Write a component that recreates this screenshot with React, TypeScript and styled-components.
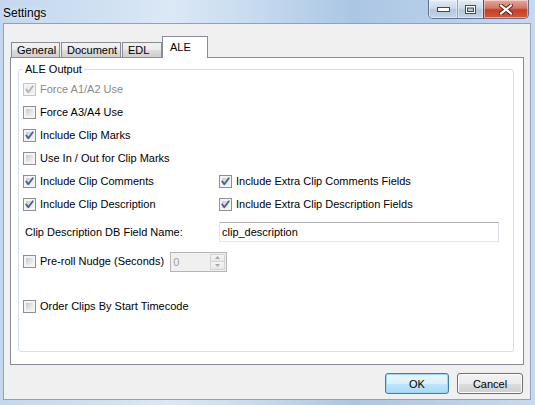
import React from 'react';
import styled, { createGlobalStyle } from 'styled-components';

const GlobalStyle = createGlobalStyle`
	html, body {
		margin: 0;
		padding: 0;
	}
	body {
		width: 535px;
		height: 405px;
		overflow: hidden;
		font-family: "Liberation Sans", Arial, sans-serif;
		font-size: 11px;
		color: #000;
	}
`;

const tabs = [
	{ name: 'General', width: 49 },
	{ name: 'Document', width: 60 },
	{ name: 'EDL', width: 40 },
	{ name: 'ALE', width: 46 },
];

const CheckMark = ({ disabled }: { disabled?: boolean }) => (
	<svg width="13" height="13" viewBox="0 0 13 13">
		<path
			d="M3.2 6.4 L5.3 9.3 L9.8 3.2"
			fill="none"
			stroke={disabled ? '#b4b4b4' : '#4a5f97'}
			strokeWidth="1.8"
			strokeLinecap="round"
			strokeLinejoin="round"
		/>
	</svg>
);

const CheckBox = ({ checked, disabled }: { checked?: boolean; disabled?: boolean }) => (
	<Box $disabled={disabled}>
		<BoxFill $disabled={disabled} />
		{checked && (
			<Mark>
				<CheckMark disabled={disabled} />
			</Mark>
		)}
	</Box>
);

const Option = ({ label, checked, disabled }: { label: string; checked?: boolean; disabled?: boolean }) => (
	<Row>
		<CheckBox checked={checked} disabled={disabled} />
		<Label $disabled={disabled}>{label}</Label>
	</Row>
);

const App: React.FunctionComponent = () => {
	return (
		<>
			<GlobalStyle />
			<Window>
				<TitleBar>
					<Title>Settings</Title>
					<Caption>
						<CapButton $w={28}>
							<svg width="13" height="5" viewBox="0 0 13 5">
								<rect x="0.5" y="0.5" width="12" height="4" fill="#fff" stroke="#3a4a60" />
							</svg>
						</CapButton>
						<CapButton $w={26}>
							<svg width="11" height="9" viewBox="0 0 11 9">
								<rect x="0.5" y="0.5" width="10" height="8" fill="#fff" stroke="#3a4a60" />
								<rect x="2.5" y="3" width="6" height="3.5" fill="#b6c8de" stroke="#3a4a60" />
							</svg>
						</CapButton>
						<CapButton $w={45} $close>
							<svg width="14" height="11" viewBox="0 0 14 11">
								<path d="M2 1.5 L12 9.5 M12 1.5 L2 9.5" stroke="#5a1e14" strokeWidth="4" strokeLinecap="square" />
								<path d="M2 1.5 L12 9.5 M12 1.5 L2 9.5" stroke="#fff" strokeWidth="2.2" strokeLinecap="square" />
							</svg>
						</CapButton>
					</Caption>
				</TitleBar>
				<Client>
					<TabStrip>
						{tabs.map((t) => (
							<Tab key={t.name} $active={t.name === 'ALE'} $w={t.width}>
								{t.name}
							</Tab>
						))}
					</TabStrip>
					<Panel>
						<Group>
							<Legend>ALE Output</Legend>
							<Option label="Force A1/A2 Use" checked disabled />
							<Option label="Force A3/A4 Use" />
							<Option label="Include Clip Marks" checked />
							<Option label="Use In / Out for Clip Marks" />
							<Pair>
								<Option label="Include Clip Comments" checked />
								<Option label="Include Extra Clip Comments Fields" checked />
								<Option label="Include Clip Description" checked />
								<Option label="Include Extra Clip Description Fields" checked />
							</Pair>
							<FieldRow>
								<FieldLabel>Clip Description DB Field Name:</FieldLabel>
								<TextBox>clip_description</TextBox>
							</FieldRow>
							<Row $top={8}>
								<CheckBox />
								<Label>Pre-roll Nudge (Seconds)</Label>
								<Spinner>
									<SpinValue>0</SpinValue>
									<SpinButtons>
										<SpinHalf>
											<svg width="5" height="3" viewBox="0 0 5 3">
												<path d="M0 3 L2.5 0 L5 3 Z" fill="#a8a8a8" />
											</svg>
										</SpinHalf>
										<SpinHalf>
											<svg width="5" height="3" viewBox="0 0 5 3">
												<path d="M0 0 L2.5 3 L5 0 Z" fill="#a8a8a8" />
											</svg>
										</SpinHalf>
									</SpinButtons>
								</Spinner>
							</Row>
							<Row $top={22}>
								<CheckBox />
								<Label>Order Clips By Start Timecode</Label>
							</Row>
						</Group>
					</Panel>
					<Buttons>
						<Button $default>OK</Button>
						<Button $w={66}>Cancel</Button>
					</Buttons>
				</Client>
			</Window>
		</>
	);
};

const Window = styled.div`
	width: 535px;
	height: 405px;
	box-sizing: border-box;
	display: flex;
	flex-direction: column;
	padding: 0 4px 5px 3px;
	background: linear-gradient(
		90deg,
		#c3d7ee 0%,
		#cfe0f2 18%,
		#dbe8f6 32%,
		#c6daef 48%,
		#abc6e4 66%,
		#b6cde8 80%,
		#c6d9ef 100%
	);
`;

const TitleBar = styled.div`
	height: 23px;
	display: flex;
	align-items: flex-start;
	justify-content: space-between;
`;

const Title = styled.div`
	font-size: 12px;
	line-height: 14px;
	padding-top: 6px;
	color: #000;
	text-shadow: 0 0 6px rgba(255, 255, 255, 0.9);
`;

const Caption = styled.div`
	display: flex;
	height: 19px;
	margin-right: 2px;
	box-sizing: border-box;
	border: 1px solid #5d7290;
	border-top: none;
	border-radius: 0 0 5px 5px;
	overflow: hidden;
`;

const CapButton = styled.div<{ $w: number; $close?: boolean }>`
	width: ${(p) => p.$w}px;
	display: flex;
	align-items: center;
	justify-content: center;
	box-sizing: border-box;
	border-left: ${(p) => (p.$close ? '1px solid #7c3a33' : '1px solid #8fa3bd')};
	&:first-child {
		border-left: none;
	}
	background: ${(p) =>
		p.$close
			? 'linear-gradient(180deg, #e6a99c 0%, #d47564 45%, #c24125 55%, #d6583b 100%)'
			: 'linear-gradient(180deg, #e3ecf6 0%, #cbd9ea 45%, #b3c6de 55%, #c4d5ea 100%)'};
	box-shadow: inset 0 0 0 1px rgba(255, 255, 255, 0.45);
`;

const Client = styled.div`
	flex: 1;
	display: flex;
	flex-direction: column;
	background: #f0f0f0;
	border: 1px solid #8ea2bb;
	padding: 12px 6px 5px 6px;
`;

const TabStrip = styled.div`
	display: flex;
	align-items: flex-end;
	gap: 1px;
	height: 22px;
	margin-bottom: -1px;
	padding-left: 1px;
	position: relative;
	z-index: 1;
`;

const Tab = styled.div<{ $active?: boolean; $w: number }>`
	width: ${(p) => p.$w}px;
	height: ${(p) => (p.$active ? 22 : 15)}px;
	margin-bottom: ${(p) => (p.$active ? 0 : 1)}px;
	margin-left: ${(p) => (p.$active ? -1 : 0)}px;
	box-sizing: border-box;
	border: 1px solid #898c95;
	border-bottom: none;
	padding: ${(p) => (p.$active ? '4px 0 0 7px' : '0 0 0 5px')};
	line-height: 13px;
	display: flex;
	align-items: ${(p) => (p.$active ? 'flex-start' : 'center')};
	background: ${(p) =>
		p.$active ? '#fff' : 'linear-gradient(180deg, #f2f2f2 0%, #ebebeb 50%, #dddddd 51%, #cfcfcf 100%)'};
`;

const Panel = styled.div`
	width: 514px;
	height: 308px;
	box-sizing: border-box;
	border: 1px solid #898c95;
	background: #fff;
	padding: 5px 9px 12px 7px;
	display: flex;
`;

const Group = styled.fieldset`
	flex: 1;
	min-width: 0;
	margin: 0;
	padding: 2px 4px 0 4px;
	border: 1px solid #d5dfe5;
	border-radius: 3px;
`;

const Legend = styled.legend`
	padding: 0 2px;
	line-height: 13px;
	color: #000;
`;

const Row = styled.div<{ $top?: number }>`
	display: flex;
	align-items: center;
	height: 23px;
	gap: 4px;
	margin-top: ${(p) => p.$top || 0}px;
	white-space: nowrap;
`;

const Pair = styled.div`
	display: grid;
	grid-template-columns: 196px 1fr;
`;

const Box = styled.span<{ $disabled?: boolean }>`
	position: relative;
	flex: none;
	display: flex;
	width: 13px;
	height: 13px;
	box-sizing: border-box;
	padding: 2px;
	border: 1px solid ${(p) => (p.$disabled ? '#c6c6c6' : '#8e8f8f')};
	background: #f4f4f4;
`;

const BoxFill = styled.span<{ $disabled?: boolean }>`
	flex: 1;
	background: ${(p) =>
		p.$disabled
			? '#ececec'
			: 'linear-gradient(135deg, #c5c9ce 0%, #dfe1e3 50%, #f4f4f5 100%)'};
`;

const Mark = styled.span`
	position: absolute;
	left: -1px;
	top: -1px;
	width: 13px;
	height: 13px;
`;

const Label = styled.span<{ $disabled?: boolean }>`
	color: ${(p) => (p.$disabled ? '#8a8a8a' : '#000')};
	line-height: 13px;
`;

const FieldRow = styled.div`
	display: grid;
	grid-template-columns: 196px 280px;
	align-items: center;
	margin-top: 6px;
	height: 20px;
`;

const FieldLabel = styled.span`
	padding-left: 2px;
`;

const TextBox = styled.div`
	height: 20px;
	box-sizing: border-box;
	border: 1px solid;
	border-color: #abadb3 #dbdfe6 #e3e9ef #e2e3ea;
	background: #fff;
	padding-left: 2px;
	line-height: 18px;
`;

const Spinner = styled.div`
	display: flex;
	width: 57px;
	height: 20px;
	margin-left: 2px;
	box-sizing: border-box;
	border: 1px solid #b5b5b5;
	background: #f0f0f0;
	padding: 1px;
`;

const SpinValue = styled.span`
	flex: 1;
	color: #a0a0a0;
	padding-left: 1px;
	line-height: 16px;
`;

const SpinButtons = styled.div`
	width: 15px;
	display: flex;
	flex-direction: column;
`;

const SpinHalf = styled.div`
	flex: 1;
	display: flex;
	align-items: center;
	justify-content: center;
	border: 1px solid #d3d3d3;
	background: linear-gradient(180deg, #f6f6f6, #e8e8e8);
	& + & {
		border-top: none;
	}
`;

const Buttons = styled.div`
	display: flex;
	justify-content: flex-end;
	gap: 8px;
	margin-top: 8px;
	padding-right: 1px;
`;

const Button = styled.div<{ $default?: boolean; $w?: number }>`
	width: ${(p) => p.$w || 64}px;
	height: 21px;
	box-sizing: border-box;
	display: flex;
	align-items: center;
	justify-content: center;
	border: 1px solid ${(p) => (p.$default ? '#3c7fb1' : '#707070')};
	border-radius: 3px;
	background: ${(p) =>
		p.$default
			? 'linear-gradient(180deg, #eaf6fd 0%, #d9f0fc 50%, #bee6fd 51%, #a7d9f5 100%)'
			: 'linear-gradient(180deg, #f2f2f2 0%, #ebebeb 50%, #dddddd 51%, #cfcfcf 100%)'};
	box-shadow: ${(p) => (p.$default ? 'inset 0 0 0 1px #9fd5f3' : 'inset 0 0 0 1px #fcfcfc')};
`;

export default App;
